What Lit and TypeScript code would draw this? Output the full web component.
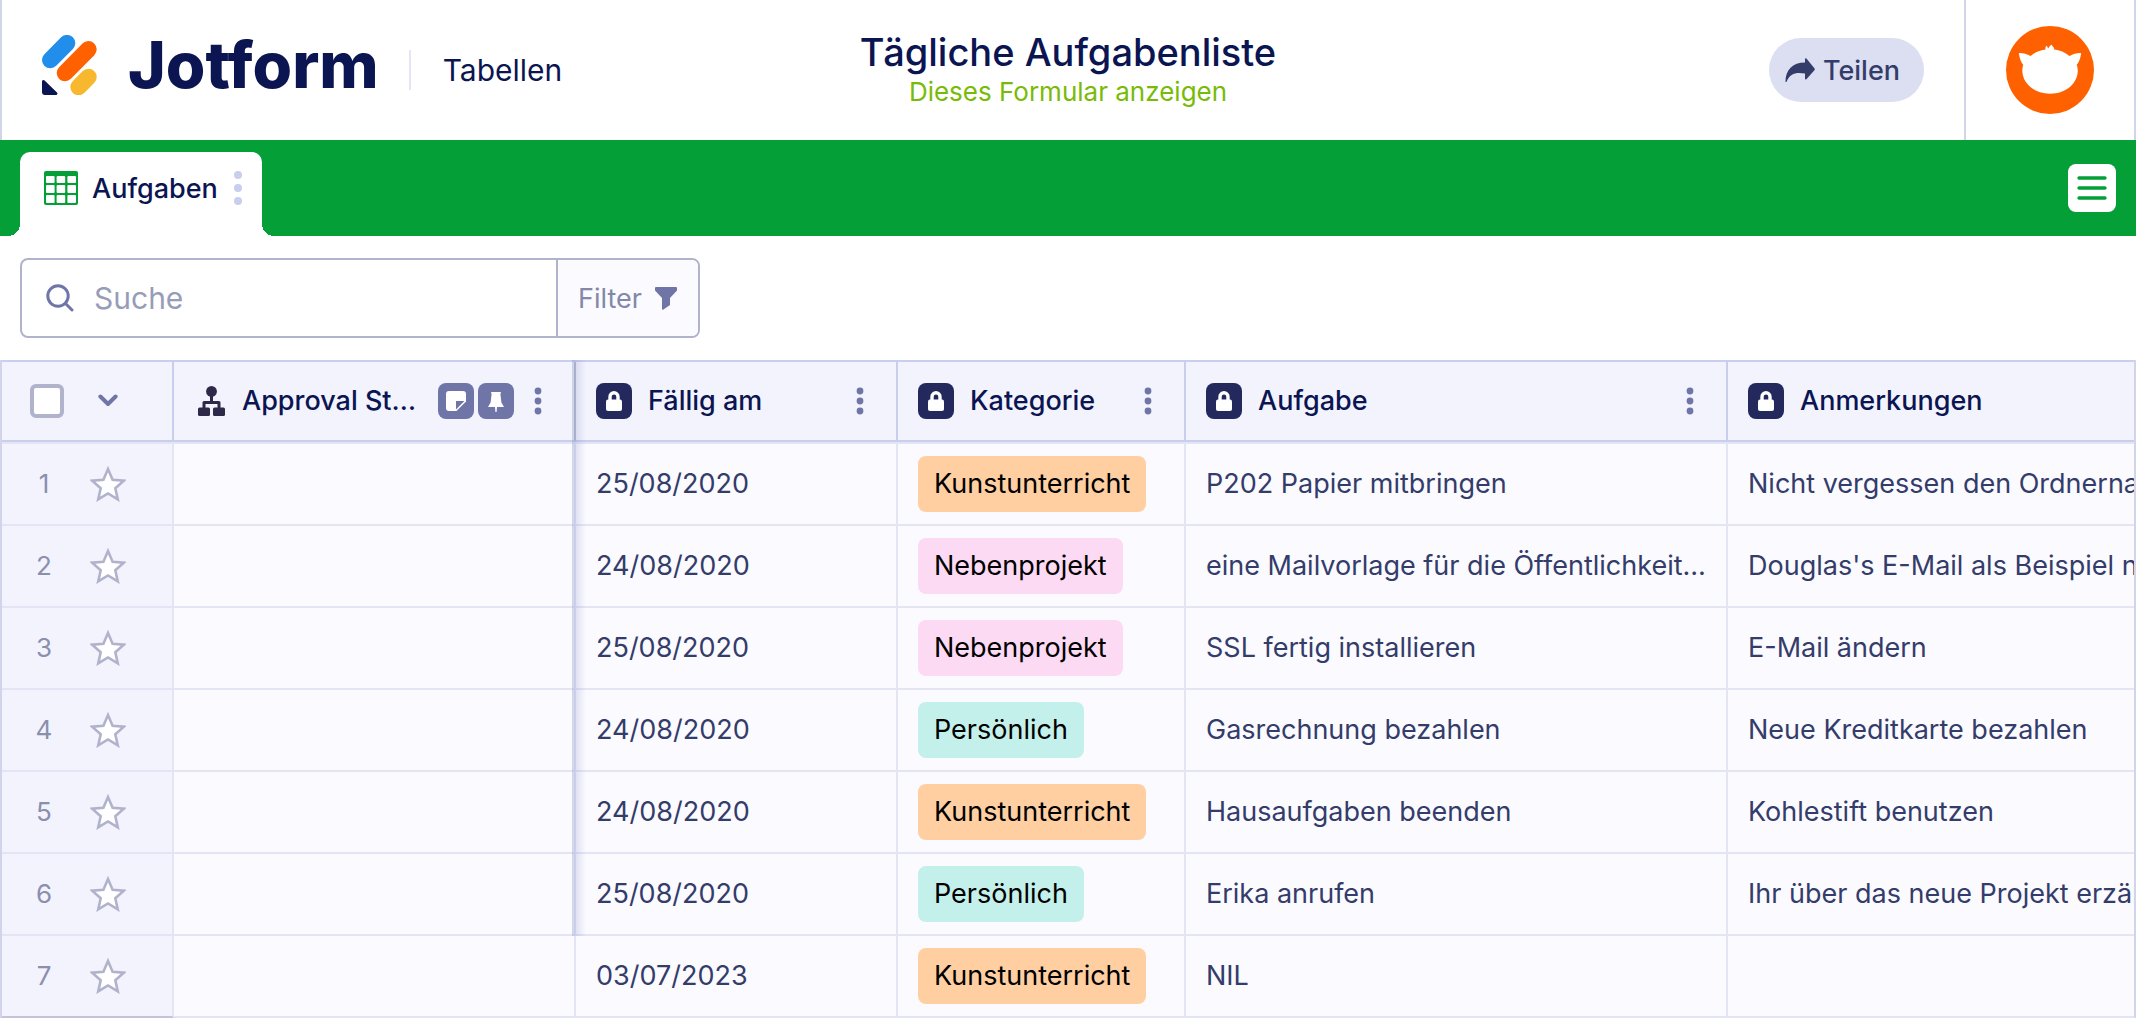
import { LitElement, html, css, svg, nothing } from "lit";
import { customElement, property } from "lit/decorators.js";
import { classMap } from "lit/directives/class-map.js";

type Tag = "art" | "side" | "personal";

interface Task {
  due: string;
  category: string;
  tag: Tag;
  task: string;
  note: string;
}

const TASKS: Task[] = [
  { due: "25/08/2020", category: "Kunstunterricht", tag: "art", task: "P202 Papier mitbringen", note: "Nicht vergessen den Ordnerna" },
  { due: "24/08/2020", category: "Nebenprojekt", tag: "side", task: "eine Mailvorlage für die Öffentlichkeit…", note: "Douglas's E-Mail als Beispiel ne" },
  { due: "25/08/2020", category: "Nebenprojekt", tag: "side", task: "SSL fertig installieren", note: "E-Mail ändern" },
  { due: "24/08/2020", category: "Persönlich", tag: "personal", task: "Gasrechnung bezahlen", note: "Neue Kreditkarte bezahlen" },
  { due: "24/08/2020", category: "Kunstunterricht", tag: "art", task: "Hausaufgaben beenden", note: "Kohlestift benutzen" },
  { due: "25/08/2020", category: "Persönlich", tag: "personal", task: "Erika anrufen", note: "Ihr über das neue Projekt erzäh" },
  { due: "03/07/2023", category: "Kunstunterricht", tag: "art", task: "NIL", note: "" },
];

const COLUMNS = [
  { label: "Fällig am", menu: true },
  { label: "Kategorie", menu: true },
  { label: "Aufgabe", menu: true },
  { label: "Anmerkungen", menu: false },
];

const base = css`
  *,
  *::before,
  *::after {
    box-sizing: border-box;
  }
  svg {
    display: block;
    flex: none;
  }
  button {
    margin: 0;
    padding: 0;
    border: 0;
    background: none;
    color: inherit;
    font: inherit;
    cursor: pointer;
  }
  a {
    color: inherit;
    text-decoration: none;
  }
`;

const lockIcon = html`<svg width="36" height="36" viewBox="0 0 36 36" aria-hidden="true">
  <rect width="36" height="36" rx="8" fill="#23295c" />
  <path d="M14 18v-4.200a4 4 0 0 1 8 0V18" fill="none" stroke="#fff" stroke-width="3.400" />
  <rect x="10" y="16.500" width="16" height="11.500" rx="2" fill="#fff" />
</svg>`;

const flowIcon = html`<svg width="28" height="30" viewBox="0 0 28 30" fill="#2e2949" aria-hidden="true">
  <circle cx="13.500" cy="5.400" r="5.400" />
  <rect x="12" y="9" width="3" height="8" />
  <path d="M6 22v-5.500h15V22" fill="none" stroke="#2e2949" stroke-width="3" stroke-linejoin="round" />
  <rect y="21.500" width="12" height="8.500" rx="1.500" />
  <rect x="15" y="21.500" width="12" height="8.500" rx="1.500" />
</svg>`;

const noteIcon = html`<svg width="36" height="36" viewBox="0 0 36 36" aria-hidden="true">
  <rect width="36" height="36" rx="8" fill="#6f76a7" />
  <path d="M11 8h14a3 3 0 0 1 3 3v7.500L18.500 28H11a3 3 0 0 1-3-3V11a3 3 0 0 1 3-3z" fill="#fff" />
  <path d="M18 18h8.400L18 26.600z" fill="#6f76a7" />
</svg>`;

const pinIcon = html`<svg width="36" height="36" viewBox="0 0 36 36" aria-hidden="true">
  <rect width="36" height="36" rx="8" fill="#6f76a7" />
  <path d="M13 9h10l-.6 2 1 8.500 2.600 4.500H19l-.4 5h-1.200l-.4-5h-7l2.600-4.500 1-8.500z" fill="#fff" />
</svg>`;

const starIcon = html`<svg width="36" height="36" viewBox="0 0 36 36" aria-hidden="true">
  <path
    d="M18 3l4.600 10.700 11.200 1-8.500 7.500 2.500 11.200L18 27.500l-9.800 5.900 2.500-11.200-8.500-7.500 11.200-1z"
    fill="#fff"
    stroke="#b0b3cb"
    stroke-width="2.600"
  />
</svg>`;

@customElement("more-button")
export class MoreButton extends LitElement {
  @property() label = "";
  @property({ type: Boolean }) large = false;

  static styles = [
    base,
    css`
      :host {
        display: block;
        flex: none;
        color: #6f76a7;
      }
      :host([large]) {
        color: #c8ceed;
      }
      .more {
        display: block;
      }
    `,
  ];

  render() {
    const step = this.large ? 13 : 10;
    const r = this.large ? 4 : 3.4;
    const h = step * 2 + 8;
    return html`<button class="more" type="button" aria-label=${this.label}>
      <svg width="8" height=${h} viewBox="0 0 8 ${h}" fill="currentColor">
        ${[0, 1, 2].map((i) => svg`<circle cx="4" cy=${4 + i * step} r=${r} />`)}
      </svg>
    </button>`;
  }
}

@customElement("page-header")
export class PageHeader extends LitElement {
  static styles = [
    base,
    css`
      :host {
        display: block;
      }
      .header {
        display: grid;
        grid-template-columns: 1fr auto 1fr;
        min-height: 140px;
        border: solid #d2d5ea;
        border-width: 0 2px;
        background: #fff;
      }
      .brand {
        display: flex;
        align-items: center;
        padding-left: 40px;
      }
      .logo {
        display: flex;
        align-items: center;
        gap: 30px;
        padding-bottom: 10px;
        font-size: 64px;
        font-weight: 800;
        line-height: 64px;
      }
      .product {
        display: flex;
        align-items: center;
        height: 40px;
        margin-left: 30px;
        padding-left: 32px;
        border-left: 2px solid #e3e5f5;
        font-size: 30px;
      }
      .title {
        display: flex;
        flex-direction: column;
        align-items: center;
        justify-content: center;
      }
      .name {
        margin: 0;
        font-size: 38px;
        font-weight: 500;
        line-height: 44px;
      }
      .view {
        color: #78bb07;
        font-size: 26px;
        line-height: 36px;
      }
      .actions {
        display: flex;
        align-items: center;
        justify-content: flex-end;
      }
      .share {
        display: flex;
        align-items: center;
        gap: 8px;
        height: 64px;
        margin-right: 40px;
        padding: 0 24px 0 16px;
        border-radius: 32px;
        background: #dcdef1;
        color: #343c6a;
        font-size: 27px;
        font-weight: 500;
      }
      .account {
        display: flex;
        align-items: center;
        align-self: stretch;
        padding: 0 40px;
        border-left: 2px solid #d2d5ea;
      }
    `,
  ];

  render() {
    return html`<header class="header">
      <div class="brand">
        <a class="logo" href="#">
          <svg width="56" height="60" viewBox="42 34 56 60" fill="none" stroke-width="16.600" stroke-linecap="round" aria-hidden="true">
            <path d="M50.300 59l16.700-16.800" stroke="#218eeb" />
            <path d="M65 72l23.400-23.700" stroke="#ff6100" />
            <path d="M78.600 86l9.800-10" stroke="#f7b82f" />
            <path d="M42 80.500c0-1.600 1.600-2 2.600-1L57 91.600c1 1 .4 2.400-1 2.400H45a3 3 0 0 1-3-3z" fill="#0a1551" />
          </svg>
          <span>Jotform</span>
        </a>
        <a class="product" href="#">Tabellen</a>
      </div>
      <div class="title">
        <h1 class="name">Tägliche Aufgabenliste</h1>
        <a class="view" href="#">Dieses Formular anzeigen</a>
      </div>
      <div class="actions">
        <button class="share" type="button">
          <svg width="30" height="24" viewBox="0 0 30 24" fill="currentColor" aria-hidden="true">
            <path d="M.5 23.800C.5 12 7.500 4.500 20 4.500V1.200c0-1 .8-1.200 1.400-.6l8 9.600c.5.600.5 1.400 0 2l-8 9c-.6.700-1.400.3-1.400-.6v-5C11 14 5 15.500 1.800 23.300c-.3.900-1.300 1-1.300.5z" />
          </svg>
          <span>Teilen</span>
        </button>
        <button class="account" type="button" aria-label="Konto">
          <svg width="88" height="88" viewBox="0 0 88 88" aria-hidden="true">
            <circle cx="44" cy="44" r="44" fill="#ff6100" />
            <path
              d="M14 27c3.500 0 7 1.200 10.500 3 4.500-3.800 9.500-6 15-6.600-.5-1.800.4-3.200 1.400-3.600.2 1.200.8 2 1.700 2.600.2-1.500 1.400-3.200 3.400-3.600 0 1 .4 1.800 1.200 2.300.8.600 1.200 1.400 1 2.300 5.600.6 10.700 2.800 15.300 6.600 3.500-1.800 7-3 10.500-3 1.400 0 1.200 1 .8 2.300-.7 3.700-1.900 6.900-4 9.400 4.500 13.600-7 29-26.800 29S13 52.300 17.200 38.700c-2.100-2.500-3.300-5.700-4-9.400-.4-1.300-.6-2.300.8-2.300z"
              fill="#fff"
            />
          </svg>
        </button>
      </div>
    </header>`;
  }
}

@customElement("tab-bar")
export class TabBar extends LitElement {
  static styles = [
    base,
    css`
      :host {
        display: block;
      }
      .bar {
        display: flex;
        align-items: center;
        justify-content: space-between;
        min-height: 96px;
        padding: 0 20px;
        background: #049f37;
      }
      .tab {
        position: relative;
        display: flex;
        align-items: center;
        align-self: flex-end;
        gap: 16px;
        height: 84px;
        padding: 0 20px 12px 24px;
        border-radius: 10px 10px 0 0;
        background: #fff;
      }
      .tab::before,
      .tab::after {
        content: "";
        position: absolute;
        bottom: 0;
        width: 12px;
        height: 12px;
      }
      .tab::before {
        right: 100%;
        background: radial-gradient(circle at 0 0, transparent 12px, #fff 12px);
      }
      .tab::after {
        left: 100%;
        background: radial-gradient(circle at 100% 0, transparent 12px, #fff 12px);
      }
      .open {
        display: flex;
        align-items: center;
        gap: 14px;
        font-size: 27px;
        font-weight: 500;
      }
      .menu {
        display: grid;
        place-items: center;
        width: 48px;
        height: 48px;
        border-radius: 8px;
        background: #fff;
      }
    `,
  ];

  render() {
    return html`<nav class="bar">
      <div class="tab">
        <button class="open" type="button">
          <svg width="34" height="34" viewBox="0 0 34 34" aria-hidden="true">
            <rect width="34" height="34" rx="2" fill="#049f37" />
            ${[5, 14, 24].map((y, row) =>
              [2, 12.6, 23.4].map((x) => svg`<rect x=${x} y=${y} width="8.600" height=${row ? 8 : 7} rx="1" fill="#fff" />`)
            )}
          </svg>
          <span>Aufgaben</span>
        </button>
        <more-button large label="Tab-Optionen"></more-button>
      </div>
      <button class="menu" type="button" aria-label="Menü">
        <svg width="30" height="24" viewBox="0 0 30 24" stroke="#049f37" stroke-width="3.400" stroke-linecap="round" aria-hidden="true">
          <path d="M2 2h26M2 12h26M2 22h26" />
        </svg>
      </button>
    </nav>`;
  }
}

@customElement("search-bar")
export class SearchBar extends LitElement {
  static styles = [
    base,
    css`
      :host {
        display: block;
        padding: 22px 20px;
      }
      .box {
        display: flex;
        width: 100%;
        max-width: 680px;
        height: 80px;
        overflow: hidden;
        border: 2px solid #b0b3cb;
        border-radius: 8px;
      }
      .search {
        display: flex;
        flex: 1;
        align-items: center;
        gap: 20px;
        min-width: 0;
        padding-left: 24px;
      }
      .input {
        flex: 1;
        min-width: 0;
        height: 100%;
        padding: 0;
        border: 0;
        outline: 0;
        background: none;
        color: #0a1551;
        font: inherit;
        font-size: 30px;
      }
      .input::placeholder {
        color: #979db8;
        opacity: 1;
      }
      .filter {
        display: flex;
        align-items: center;
        gap: 12px;
        padding: 0 20px;
        border-left: 2px solid #b0b3cb;
        background: #fafaff;
        color: #8388a9;
        font-size: 27px;
      }
    `,
  ];

  render() {
    return html`<div class="box">
      <label class="search">
        <svg width="28" height="28" viewBox="0 0 28 28" fill="none" stroke="#6f76a7" stroke-width="3" stroke-linecap="round" aria-hidden="true">
          <circle cx="12" cy="12" r="10.200" />
          <path d="M19.500 19.500l6.500 6.500" />
        </svg>
        <input class="input" type="search" placeholder="Suche" aria-label="Suche" />
      </label>
      <button class="filter" type="button">
        <span>Filter</span>
        <svg width="24" height="24" viewBox="0 0 24 24" fill="#6f76a7" aria-hidden="true">
          <path d="M2 1h20a1 1 0 0 1 1 1v2.500L16 12v7l-6.500 4.500c-.8.500-1.500.2-1.500-.7V12L1 4.500V2a1 1 0 0 1 1-1z" />
        </svg>
      </button>
    </div>`;
  }
}

@customElement("task-table")
export class TaskTable extends LitElement {
  static styles = [
    base,
    css`
      :host {
        display: block;
      }
      .frame {
        position: relative;
        overflow-x: clip;
        border: solid #d2d5ea;
        border-width: 0 2px;
      }
      .table {
        width: 100%;
        border-collapse: separate;
        border-spacing: 0;
        table-layout: fixed;
        border-top: 2px solid #c8ceed;
        font-size: 27px;
        line-height: 36px;
      }
      .col-row {
        width: 172px;
      }
      .col-status {
        width: 402px;
      }
      .col-due {
        width: 322px;
      }
      .col-category {
        width: 288px;
      }
      .col-task {
        width: 542px;
      }
      .th,
      .td {
        padding: 0 0 0 20px;
        overflow: hidden;
        border: solid #e3e5f5;
        border-width: 0 2px 2px 0;
        background: #fafaff;
        color: #343c6a;
        font-weight: 400;
        text-align: left;
        white-space: nowrap;
      }
      .th {
        height: 80px;
        border-color: #c8ceed;
        background: #f3f3fe;
        color: #0a1551;
        font-weight: 500;
      }
      .th:last-child,
      .td:last-child {
        border-right: 0;
      }
      .pinned {
        padding-left: 24px;
        border-right-color: #b9bccd;
      }
      .td {
        height: 82px;
      }
      .first .td {
        height: 84px;
        border-top-width: 2px;
      }
      .index {
        padding-left: 28px;
        background: #f3f3fe;
        color: #8b8fae;
        font-size: 26px;
      }
      .last .index {
        border-bottom-color: #c3c3d9;
      }
      .head {
        display: flex;
        align-items: center;
        gap: 16px;
        padding-right: 32px;
      }
      .label {
        flex: 1;
      }
      .badges {
        display: flex;
        gap: 4px;
        margin-right: 4px;
      }
      .select,
      .mark {
        display: flex;
        align-items: center;
        gap: 34px;
      }
      .mark {
        gap: 32px;
      }
      .number {
        width: 28px;
        text-align: center;
      }
      .check {
        width: 34px;
        height: 34px;
        margin: 0;
        border: 4px solid #b0b3cb;
        border-radius: 6px;
        background: #fff;
        appearance: none;
      }
      .tag {
        display: inline-block;
        padding: 10px 16px;
        border-radius: 8px;
        color: #000;
        vertical-align: middle;
      }
      .art {
        background: #ffcfa2;
      }
      .side {
        background: #fcdaf3;
      }
      .personal {
        background: #c4f0eb;
      }
      .shade {
        position: absolute;
        top: 0;
        bottom: 82px;
        left: 570px;
        width: 14px;
        background: linear-gradient(90deg, rgba(120, 132, 190, 0.32), rgba(120, 132, 190, 0.2) 30%, rgba(120, 132, 190, 0));
        pointer-events: none;
      }
    `,
  ];

  render() {
    return html`<div class="frame">
      <table class="table">
        <colgroup>
          <col class="col-row" />
          <col class="col-status" />
          <col class="col-due" />
          <col class="col-category" />
          <col class="col-task" />
          <col />
        </colgroup>
        <thead>
          <tr>
            <th class="th index" scope="col">
              <div class="select">
                <input class="check" type="checkbox" aria-label="Alle auswählen" />
                <button type="button" aria-label="Auswahl">
                  <svg width="20" height="14" viewBox="0 0 20 14" fill="none" stroke="#6f76a7" stroke-width="4" stroke-linecap="round" stroke-linejoin="round">
                    <path d="M2.400 2.500L10 10l7.600-7.500" />
                  </svg>
                </button>
              </div>
            </th>
            <th class="th pinned" scope="col">
              <div class="head">
                ${flowIcon}
                <span class="label">Approval St…</span>
                <span class="badges">${noteIcon}${pinIcon}</span>
                <more-button label="Approval St…"></more-button>
              </div>
            </th>
            ${COLUMNS.map(
              (c) => html`<th class="th" scope="col">
                <div class="head">
                  ${lockIcon}
                  <span class="label">${c.label}</span>
                  ${c.menu ? html`<more-button label=${c.label}></more-button>` : nothing}
                </div>
              </th>`
            )}
          </tr>
        </thead>
        <tbody>
          ${TASKS.map(
            (t, i) => html`<tr class=${classMap({ first: i === 0, last: i === TASKS.length - 1 })}>
              <td class="td index">
                <div class="mark">
                  <span class="number">${i + 1}</span>
                  <button type="button" aria-label="Favorit">${starIcon}</button>
                </div>
              </td>
              <td class="td"></td>
              <td class="td">${t.due}</td>
              <td class="td"><span class=${classMap({ tag: true, [t.tag]: true })}>${t.category}</span></td>
              <td class="td">${t.task}</td>
              <td class="td">${t.note}</td>
            </tr>`
          )}
        </tbody>
      </table>
      <div class="shade"></div>
    </div>`;
  }
}

@customElement("app-root")
export class AppRoot extends LitElement {
  static styles = css`
    :host {
      display: block;
      background: #fff;
      color: #0a1551;
      font-family: Inter, "Liberation Sans", sans-serif;
    }
  `;

  render() {
    return html`
      <page-header></page-header>
      <tab-bar></tab-bar>
      <search-bar></search-bar>
      <task-table></task-table>
    `;
  }
}
